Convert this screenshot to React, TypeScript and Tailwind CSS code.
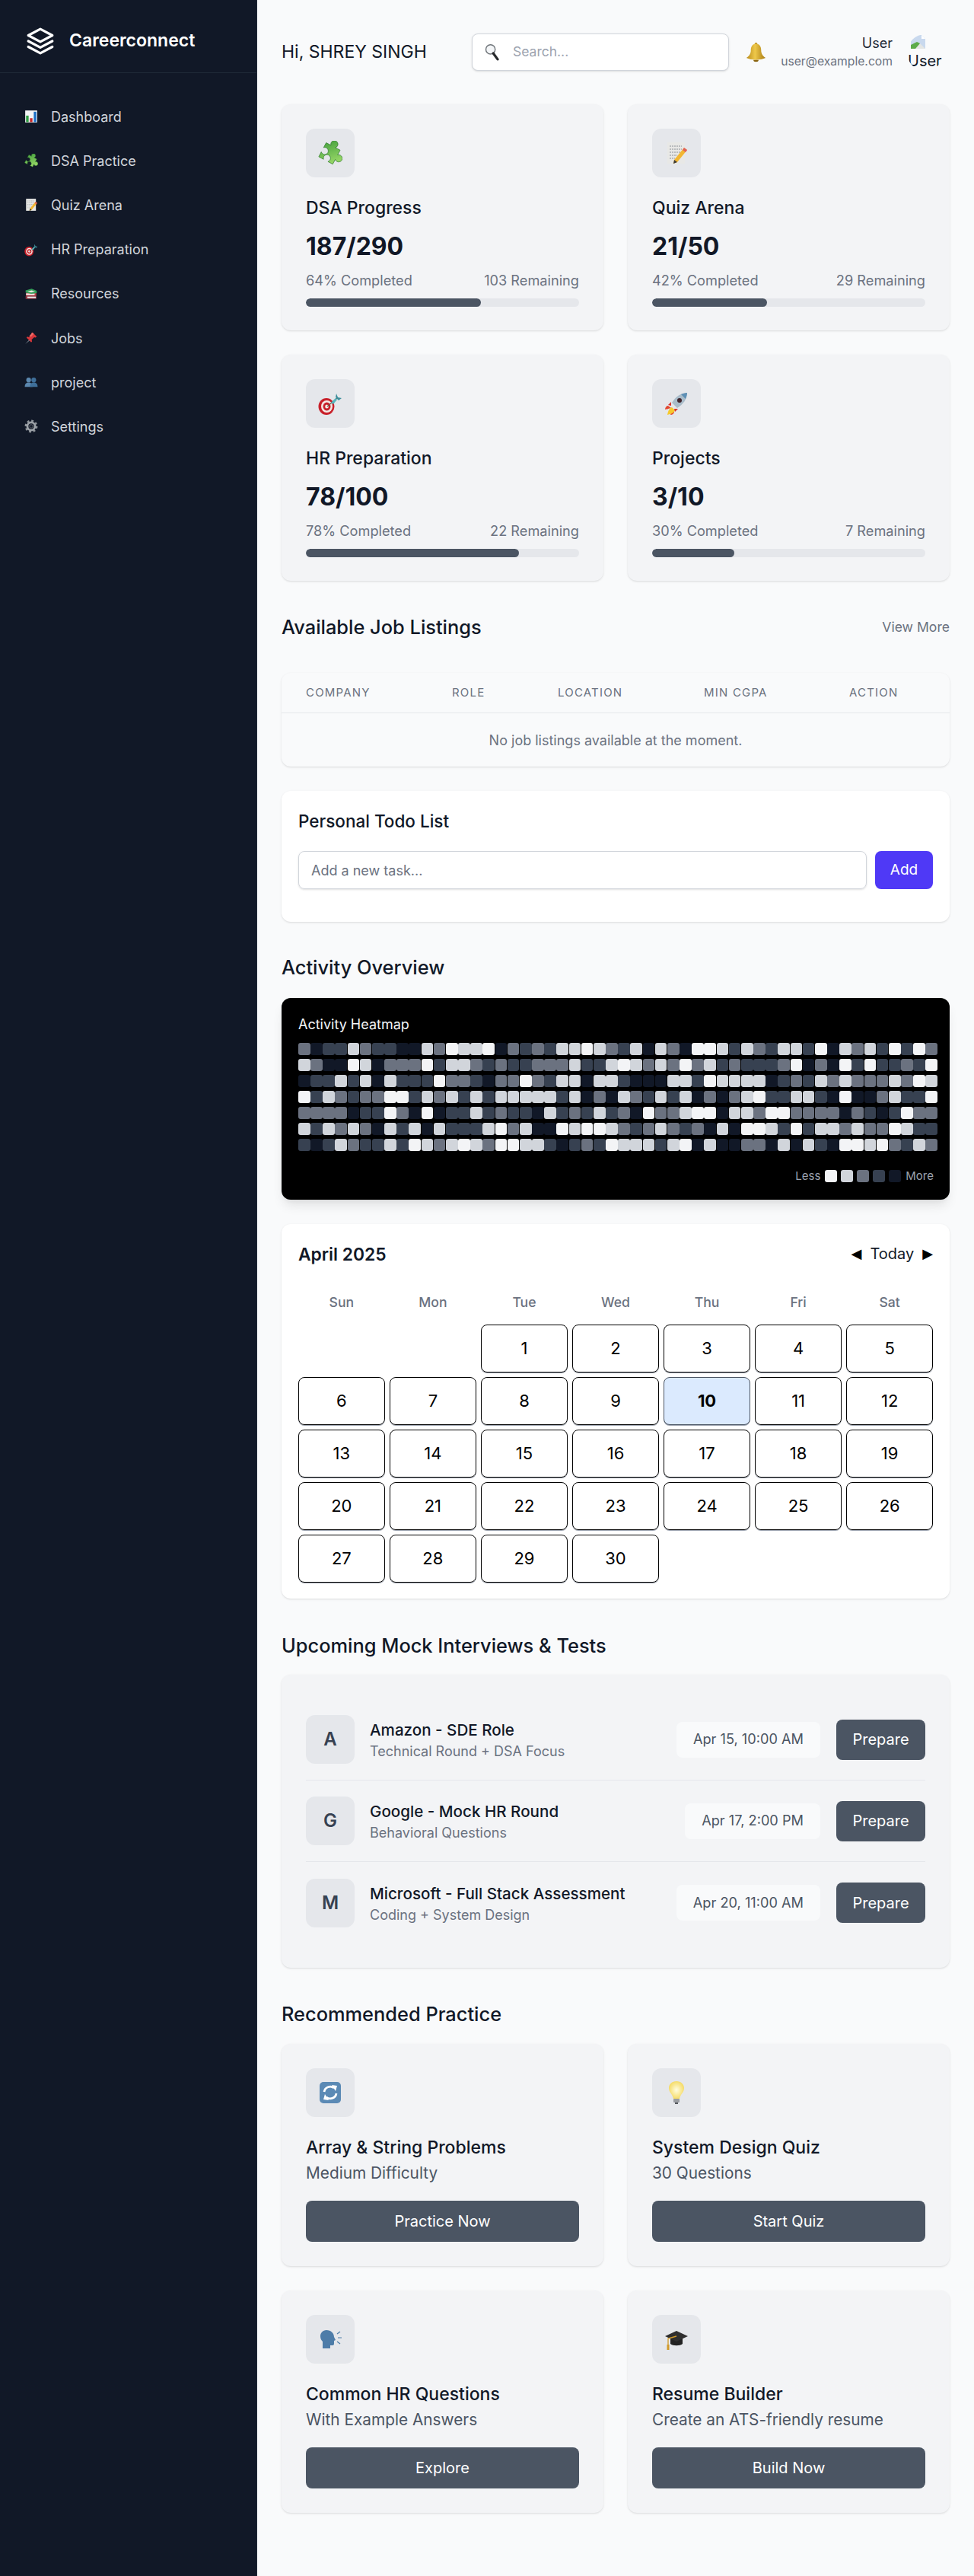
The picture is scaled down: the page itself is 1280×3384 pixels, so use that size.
import React from "react";

type EmojiName =
  | "chart" | "puzzle" | "memo" | "target" | "books" | "pin" | "busts" | "gear"
  | "search" | "bell" | "cycle" | "bulb" | "speak" | "cap" | "rocket";

const emojiArt: Record<EmojiName, React.ReactNode> = {
  chart: (
    <>
      <rect x="2" y="2" width="28" height="28" fill="#f4f5f6" />
      <rect x="4" y="14" width="6" height="15" fill="#2f9e44" />
      <rect x="13" y="20" width="6" height="9" fill="#c92a2a" />
      <rect x="22" y="5" width="6" height="24" fill="#1c6fc4" />
    </>
  ),
  puzzle: (
    <>
      <defs>
        <linearGradient id="pz" x1="0" y1="0" x2="1" y2="1">
          <stop offset="0" stopColor="#3f9d3c" />
          <stop offset="1" stopColor="#a9e36f" />
        </linearGradient>
      </defs>
      <path
        transform="rotate(28 16 16) translate(16 17) scale(1.3) translate(-16.5 -16)"
        d="M8 8H13.5a3.6 3.6 0 1 1 5 0H24V13.5a3.6 3.6 0 1 1 0 5V24H18.5a3.6 3.6 0 1 0 -5 0H8V18.5a3.6 3.6 0 1 0 0 -5Z"
        fill="url(#pz)"
        stroke="#2f7a2c"
        strokeWidth="0.5"
      />
    </>
  ),
  memo: (
    <>
      <rect x="4" y="2" width="23" height="28" fill="#e8e8e6" />
      <path d="M7 7h16M7 11h16M7 15h14M7 19h10M7 23h7" stroke="#8a8f96" strokeWidth="1" strokeDasharray="2 1" />
      <path d="M26 9l4 3-13 16-5 2 1-5z" fill="#f2b632" />
      <path d="M26 9l4 3-2 3-4-3z" fill="#e2605a" />
      <path d="M12 30l1-5 4 3z" fill="#3b3b3b" />
    </>
  ),
  target: (
    <>
      <ellipse cx="11" cy="20" rx="10.5" ry="11" fill="#c8202a" />
      <ellipse cx="11.5" cy="20" rx="7.5" ry="8" fill="#f4e8e4" />
      <ellipse cx="11.5" cy="20" rx="5" ry="5.4" fill="#c8202a" />
      <ellipse cx="11.5" cy="20" rx="2.3" ry="2.5" fill="#f4e8e4" />
      <path d="M12 20L26 8" stroke="#6b5b4b" strokeWidth="1.2" />
      <path d="M17 15l6-6 2 2-5 6z" fill="#55b6bd" />
      <path d="M24 3l2 5 5 1-4 3-4-4z" fill="#3c8f9c" />
    </>
  ),
  books: (
    <>
      <rect x="3" y="21" width="25" height="7" rx="1" fill="#8d3540" />
      <rect x="7" y="22.5" width="20" height="3.5" fill="#eee" />
      <rect x="4" y="13" width="24" height="8" rx="1" fill="#c8444c" />
      <rect x="4" y="15" width="20" height="4" fill="#f0eeea" />
      <path d="M3 8l14-4 12 5v5l-13 2-13-3z" fill="#35a05a" />
      <path d="M7 10l10-2 8 2-9 3z" fill="#e8e8e0" />
    </>
  ),
  pin: (
    <>
      <path d="M2 30l11-12 2 2z" fill="#7c8794" />
      <path d="M19 3l10 10-3 2-3-1-6 6 1 4-2 2-11-11 2-2 4 1 6-6-1-3z" fill="#d8383c" />
      <path d="M19 3l3 3-6 7-5-1z" fill="#ee6a66" />
    </>
  ),
  busts: (
    <>
      <circle cx="10" cy="11" r="5.5" fill="#5b87ae" />
      <path d="M1 27c0-7 4-10 9-10s9 3 9 10z" fill="#5b87ae" />
      <circle cx="22" cy="11" r="5.5" fill="#3f6f9a" />
      <path d="M13 27c0-7 4-10 9-10s9 3 9 10z" fill="#3f6f9a" />
    </>
  ),
  gear: (
    <>
      <circle cx="16" cy="16" r="12.5" fill="none" stroke="#8f949a" strokeWidth="5" strokeDasharray="5 4.8" />
      <circle cx="16" cy="16" r="9" fill="none" stroke="#9ca1a7" strokeWidth="5" />
      <circle cx="16" cy="16" r="4" fill="none" stroke="#6b7076" strokeWidth="1.5" />
    </>
  ),
  search: (
    <>
      <circle cx="12" cy="11" r="8.5" fill="#f4f6f8" stroke="#6f7479" strokeWidth="2" />
      <path d="M17 18l8 11" stroke="#26282b" strokeWidth="4.5" strokeLinecap="round" />
    </>
  ),
  bell: (
    <>
      <defs>
        <linearGradient id="bl" x1="0" y1="0" x2="1" y2="0">
          <stop offset="0" stopColor="#b98a1a" />
          <stop offset="0.45" stopColor="#eec84a" />
          <stop offset="1" stopColor="#a87a12" />
        </linearGradient>
      </defs>
      <circle cx="16" cy="3.5" r="2.2" fill="#b98a1a" />
      <path d="M16 3c-6 0-8 5-8 10 0 6-3 9-7 12 4 2 9 3 15 3s11-1 15-3c-4-3-7-6-7-12 0-5-2-10-8-10z" fill="url(#bl)" />
      <path d="M12 28a4 3 0 008 0z" fill="#8a6410" />
    </>
  ),
  cycle: (
    <>
      <rect x="2" y="2" width="28" height="28" rx="5" fill="#5b8ab5" />
      <path d="M8 15a8 8 0 0113-5" fill="none" stroke="#fff" strokeWidth="2.8" />
      <path d="M18 6l7 1-2 7z" fill="#fff" />
      <path d="M24 17a8 8 0 01-13 5" fill="none" stroke="#fff" strokeWidth="2.8" />
      <path d="M14 26l-7-1 2-7z" fill="#fff" />
    </>
  ),
  bulb: (
    <>
      <defs>
        <radialGradient id="bb">
          <stop offset="0" stopColor="#fffde0" />
          <stop offset="1" stopColor="#f5dc6a" />
        </radialGradient>
      </defs>
      <path d="M16 1c-6 0-10 4-10 9 0 6 5 8 6 14h8c1-6 6-8 6-14 0-5-4-9-10-9z" fill="url(#bb)" />
      <rect x="12" y="24" width="8" height="5" rx="1" fill="#9a9da2" />
      <rect x="14" y="29" width="4" height="2" fill="#55585c" />
    </>
  ),
  speak: (
    <>
      <path
        d="M11 4c-5 0-8 4-8 8 0 3 1 5 3 7v9h10v-4h3c2 0 2-2 2-3v-3l2-1-2-4c0-5-4-9-10-9z"
        fill="#4d7ca8"
      />
      <path d="M25 9l4-3M26 14h5M25 19l4 3" stroke="#4d7ca8" strokeWidth="1.2" />
    </>
  ),
  cap: (
    <>
      <path d="M8 15v7c3 3 13 3 16 0v-7z" fill="#222" />
      <path d="M1 12L16 5l15 7-15 7z" fill="#2f2f2f" />
      <path d="M16 12L5 15v9" fill="none" stroke="#d19a2a" strokeWidth="1.3" />
      <path d="M3.5 23h3v7h-3z" fill="#d19a2a" />
    </>
  ),
  rocket: (
    <>
      <path d="M5 19c-2 0-4 2-4 5 2-1 3 0 4-1l4-1z" fill="#e2452f" />
      <path d="M13 27c0 2-2 4-5 4 1-2 0-3 1-4l1-4z" fill="#e2452f" />
      <path d="M10 21c-3 1-5 4-6 10 5-1 9-3 10-6z" fill="#f6c92d" />
      <path d="M30 2c-8 0-15 5-20 13l7 7c8-5 13-12 13-20z" fill="#a9bcc9" />
      <path d="M30 2c-3 0-5 1-8 2l6 6c1-3 2-5 2-8z" fill="#5e90b5" />
      <circle cx="20" cy="12" r="3" fill="#40252c" />
      <path d="M9 14l-4 4 4 1zM18 23l-4 4-1-4z" fill="#d9332b" />
    </>
  ),
};

const Emoji = ({ name, className }: { name: EmojiName; className: string }) => (
  <svg viewBox="0 0 32 32" className={className}>
    {emojiArt[name]}
  </svg>
);

const navItems: { icon: EmojiName; label: string }[] = [
  { icon: "chart", label: "Dashboard" },
  { icon: "puzzle", label: "DSA Practice" },
  { icon: "memo", label: "Quiz Arena" },
  { icon: "target", label: "HR Preparation" },
  { icon: "books", label: "Resources" },
  { icon: "pin", label: "Jobs" },
  { icon: "busts", label: "project" },
  { icon: "gear", label: "Settings" },
];

const stats: { icon: EmojiName; title: string; value: string; done: string; left: string; pct: number }[] = [
  { icon: "puzzle", title: "DSA Progress", value: "187/290", done: "64% Completed", left: "103 Remaining", pct: 64 },
  { icon: "memo", title: "Quiz Arena", value: "21/50", done: "42% Completed", left: "29 Remaining", pct: 42 },
  { icon: "target", title: "HR Preparation", value: "78/100", done: "78% Completed", left: "22 Remaining", pct: 78 },
  { icon: "rocket", title: "Projects", value: "3/10", done: "30% Completed", left: "7 Remaining", pct: 30 },
];

const interviews = [
  { letter: "A", title: "Amazon - SDE Role", sub: "Technical Round + DSA Focus", date: "Apr 15, 10:00 AM" },
  { letter: "G", title: "Google - Mock HR Round", sub: "Behavioral Questions", date: "Apr 17, 2:00 PM" },
  { letter: "M", title: "Microsoft - Full Stack Assessment", sub: "Coding + System Design", date: "Apr 20, 11:00 AM" },
];

const practice: { icon: EmojiName; title: string; sub: string; cta: string }[] = [
  { icon: "cycle", title: "Array & String Problems", sub: "Medium Difficulty", cta: "Practice Now" },
  { icon: "bulb", title: "System Design Quiz", sub: "30 Questions", cta: "Start Quiz" },
  { icon: "speak", title: "Common HR Questions", sub: "With Example Answers", cta: "Explore" },
  { icon: "cap", title: "Resume Builder", sub: "Create an ATS-friendly resume", cta: "Build Now" },
];

// one string per weekday, 52 weeks, 0 darkest .. 4 lightest
const heat = [
  "2011321100" + "3243340212" + "1334321303" + "2044313213" + "314032314142",
  "3200430222" + "4133212112" + "2231134323" + "2423121112" + "402041411214",
  "0113130311" + "1422102242" + "1330331000" + "3314333301" + "213232223243",
  "4132122441" + "3231313333" + "3130203213" + "1302023411" + "331040023114",
  "2222011420" + "4011312110" + "3121312042" + "2344033244" + "222202101422",
  "3132320313" + "0311134230" + "0434432123" + "2120304431" + "413323224311",
  "1013211314" + "3234324433" + "1012143331" + "3403002203" + "031044342132",
];

const heatColors = ["bg-[#111827]", "bg-[#374151]", "bg-[#6b7280]", "bg-[#d1d5db]", "bg-[#f3f4f6]"];

const StatCard = ({ icon, title, value, done, left, pct }: (typeof stats)[number]) => (
  <div className="bg-[#f3f4f6] rounded-xl shadow-sm p-8 h-[297px]">
    <div className="w-16 h-16 rounded-xl bg-[#e5e7eb] flex items-center justify-center">
      <Emoji name={icon} className="w-8 h-8" />
    </div>
    <h3 className="mt-[25px] text-[23px] leading-[30px] font-medium text-[#111827]">{title}</h3>
    <p className="mt-[16px] text-[32px] leading-[40px] font-bold text-[#111827]">{value}</p>
    <div className="mt-[12px] flex justify-between text-[18.2px] leading-6 text-[#6b7280]">
      <span>{done}</span>
      <span>{left}</span>
    </div>
    <div className="mt-[12px] h-[11px] rounded-full bg-[#e5e7eb] overflow-hidden">
      <div className="h-full rounded-full bg-[#4b5563]" style={{ width: `${pct}%` }} />
    </div>
  </div>
);

const PracticeCard = ({ icon, title, sub, cta }: (typeof practice)[number]) => (
  <div className="bg-[#f3f4f6] rounded-xl shadow-sm p-8 h-[292px]">
    <div className="w-16 h-16 rounded-xl bg-[#e5e7eb] flex items-center justify-center">
      <Emoji name={icon} className="w-8 h-8" />
    </div>
    <h3 className="mt-[25px] text-[23px] leading-[30px] font-medium text-[#111827]">{title}</h3>
    <p className="mt-[7px] text-[20.8px] leading-6 text-[#4b5563]">{sub}</p>
    <button className="mt-6 w-full h-[54px] rounded-lg bg-[#4b5563] text-[20px] text-white">{cta}</button>
  </div>
);

const Calendar = () => {
  const cells: (number | null)[] = [null, null];
  for (let d = 1; d <= 30; d++) cells.push(d);
  return (
    <div className="mt-8 bg-white rounded-xl shadow-sm px-[22px] pt-[24px] h-[492px]">
      <div className="flex items-center justify-between h-8">
        <h3 className="text-[22.8px] font-semibold text-[#111827]">April 2025</h3>
        <div className="flex items-center gap-[11px] text-[20px] text-[#111827] -mt-[3px]">
          <span className="font-['DejaVu_Sans',sans-serif] text-[18px] text-black">◀</span>
          <span>Today</span>
          <span className="font-['DejaVu_Sans',sans-serif] text-[18px] text-black">▶</span>
        </div>
      </div>
      <div className="mt-[33px] mb-[14px] grid grid-cols-7 gap-x-[6.4px] h-[29px] items-center text-center text-[17.6px] font-medium text-[#6b7280]">
        {["Sun", "Mon", "Tue", "Wed", "Thu", "Fri", "Sat"].map((d) => (
          <span key={d}>{d}</span>
        ))}
      </div>
      <div className="grid grid-cols-7 gap-x-[6.4px] gap-y-[6px]">
        {cells.map((d, i) =>
          d === null ? (
            <div key={`e${i}`} className="h-[63px]" />
          ) : (
            <div
              key={d}
              className={`h-[63px] rounded-lg border flex items-center justify-center text-[22px] text-black shadow-[0_1px_0_#9ca3af] ${
                d === 10 ? "bg-[#dbeafe] border-[#4b5563] font-bold" : "border-black"
              }`}
            >
              {d}
            </div>
          ),
        )}
      </div>
    </div>
  );
};

export default function App() {
  return (
    <div className="flex min-h-[3384px] bg-[#f9fafb] font-['Inter',sans-serif]">
      <aside className="w-[338px] shrink-0 bg-[#111827] border-r border-[#1f2937]">
        <div className="h-[96px] border-b border-[#1f2937] flex items-center pl-[33px] pt-3 gap-[18px]">
          <svg viewBox="0 0 24 24" className="w-10 h-10" fill="none" stroke="#fff" strokeWidth="1.9" strokeLinejoin="round" strokeLinecap="round">
            <path d="M12 2.5l9.5 5-9.5 5-9.5-5z" />
            <path d="M2.5 12l9.5 5 9.5-5" />
            <path d="M2.5 16.5l9.5 5 9.5-5" />
          </svg>
          <span className="text-[23px] font-semibold text-white">Careerconnect</span>
        </div>
        <nav className="pt-[28px]">
          {navItems.map((n) => (
            <div key={n.label} className="h-[58.2px] flex items-center pl-[32px] gap-[17px] text-[18px] text-[#d1d5db]">
              <Emoji name={n.icon} className="w-[18px] h-[18px]" />
              <span>{n.label}</span>
            </div>
          ))}
        </nav>
      </aside>

      <main className="flex-1 min-w-0 px-8 pt-[44px]">
        <header className="flex items-center h-[49px]">
          <div className="w-[250px] text-[23px] text-[#111827]">Hi, SHREY SINGH</div>
          <div className="w-[338px] h-[49px] rounded-lg bg-white border border-[#d1d5db] shadow-sm flex items-center pl-[15px] gap-[15px]">
            <Emoji name="search" className="w-[23px] h-[23px] shrink-0" />
            <input placeholder="Search..." className="min-w-0 flex-1 outline-none text-[17.5px] placeholder:text-[#9ca3af]" />
          </div>
          <Emoji name="bell" className="ml-[22px] w-[27px] h-[27px] shrink-0" />
          <div className="flex-1 text-right">
            <div className="text-[18px] leading-6 text-[#1f2937]">User</div>
            <div className="text-[15.7px] leading-6 text-[#6b7280]">user@example.com</div>
          </div>
          <div className="ml-[19px] mr-2 w-12 h-12 rounded-full overflow-hidden shrink-0 text-[20px] leading-6 text-[#111827]">
            <svg viewBox="0 0 21 20" className="ml-[4px] w-[21px] h-[20px]">
              <path d="M1 1h14l5 5v13H1z" fill="#c9d9ee" />
              <path d="M1 19l10-8 3 2 6 6z" fill="#e4e6e4" />
              <path d="M1 19V14l8-4 4 2-6 7z" fill="#5cab4a" />
              <path d="M15 1l5 5h-5z" fill="#fff" />
            </svg>
            <div className="mt-[3px] whitespace-nowrap pl-[1px]">User</div>
          </div>
        </header>

        <section className="mt-[44px] grid grid-cols-2 gap-8">
          {stats.map((s) => (
            <StatCard key={s.title} {...s} />
          ))}
        </section>

        <div className="mt-[45px] flex items-center justify-between h-8">
          <h2 className="text-[25.4px] font-medium text-[#111827]">Available Job Listings</h2>
          <span className="text-[17.6px] text-[#6b7280]">View More</span>
        </div>

        <div className="mt-[44px] bg-[#f9fafb] rounded-xl shadow-sm h-[123px]">
          <div className="h-[53px] px-8 grid grid-cols-[192px_139px_192px_191px_1fr] items-center border-b border-[#e5e7eb] text-[15px] tracking-[1.2px] text-[#6b7280]">
            <span>COMPANY</span>
            <span>ROLE</span>
            <span>LOCATION</span>
            <span>MIN CGPA</span>
            <span>ACTION</span>
          </div>
          <div className="h-[70px] flex items-center justify-center text-[18px] text-[#6b7280]">
            No job listings available at the moment.
          </div>
        </div>

        <div className="mt-8 bg-white rounded-xl shadow-sm h-[172px] px-[22px] pt-[25px]">
          <h3 className="text-[22.5px] leading-[30px] font-medium text-[#111827]">Personal Todo List</h3>
          <div className="mt-6 flex gap-[11px]">
            <input
              placeholder="Add a new task..."
              className="flex-1 h-[50px] rounded-lg border border-[#d1d5db] shadow-sm px-4 text-[18px] outline-none placeholder:text-[#6b7280]"
            />
            <button className="w-[76px] h-[50px] rounded-lg bg-[#4f39f6] text-[19px] text-white">Add</button>
          </div>
        </div>

        <h2 className="mt-[44px] text-[25.4px] leading-8 font-medium text-[#111827]">Activity Overview</h2>

        <div className="mt-6 bg-black rounded-xl shadow-lg h-[265px] pl-[22px] pt-[23px]">
          <h3 className="text-[18px] leading-6 text-[#f3f4f6]">Activity Heatmap</h3>
          <div className="mt-3 w-[840px] flex flex-col gap-y-[5px]">
            {heat.map((row, r) => (
              <div key={r} className="grid grid-cols-[repeat(52,1fr)] gap-x-[0.6px]">
                {row.split("").map((v, c) => (
                  <div key={c} className={`h-4 rounded-[3px] ${heatColors[Number(v)]}`} />
                ))}
              </div>
            ))}
          </div>
          <div className="mt-[25px] mr-[21px] flex items-center justify-end gap-[5px] text-[15px] leading-4 text-[#9ca3af]">
            <span className="mr-[1px]">Less</span>
            {["bg-[#f3f4f6]", "bg-[#d1d5db]", "bg-[#6b7280]", "bg-[#374151]", "bg-[#111827]"].map((c) => (
              <div key={c} className={`w-4 h-4 rounded-[3px] ${c}`} />
            ))}
            <span className="ml-[1px]">More</span>
          </div>
        </div>

        <Calendar />

        <h2 className="mt-[46px] text-[25.4px] leading-8 font-medium text-[#111827]">Upcoming Mock Interviews &amp; Tests</h2>

        <div className="mt-[22px] bg-[#f3f4f6] rounded-xl shadow-sm p-8 h-[385px]">
          {interviews.map((it, i) => (
            <div key={it.letter} className={`h-[107px] flex items-center ${i < 2 ? "border-b border-[#e5e7eb]" : ""}`}>
              <div className="w-16 h-16 rounded-xl bg-[#e5e7eb] flex items-center justify-center text-[24px] font-semibold text-[#374151]">
                {it.letter}
              </div>
              <div className="ml-[20px] flex-1 pt-[2px]">
                <div className="text-[20.6px] leading-7 font-medium text-[#111827]">{it.title}</div>
                <div className="mt-[2px] text-[18px] leading-6 text-[#6b7280]">{it.sub}</div>
              </div>
              <div className="h-[47px] px-[22px] rounded-lg bg-[#f9fafb] flex items-center text-[18.2px] text-[#4b5563]">{it.date}</div>
              <button className="ml-[21px] w-[117px] h-[53px] rounded-lg bg-[#4b5563] text-[20px] text-white">Prepare</button>
            </div>
          ))}
        </div>

        <h2 className="mt-[45px] text-[25.4px] leading-8 font-medium text-[#111827]">Recommended Practice</h2>

        <section className="mt-[23px] grid grid-cols-2 gap-8">
          {practice.map((p) => (
            <PracticeCard key={p.title} {...p} />
          ))}
        </section>
      </main>
    </div>
  );
}
